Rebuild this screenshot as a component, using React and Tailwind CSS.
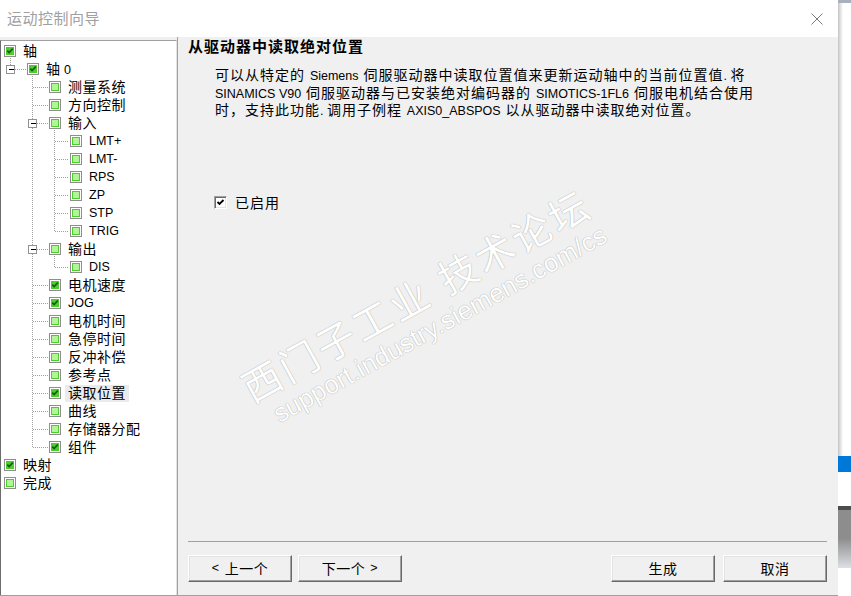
import React from "react";

const F = "font-['Liberation_Sans','Noto_Sans_CJK_SC',sans-serif]";

const rows = [
  { l: 0, t: "轴", c: true },
  { l: 1, t: "轴", n: " 0", c: true, exp: true },
  { l: 2, t: "测量系统" },
  { l: 2, t: "方向控制" },
  { l: 2, t: "输入", exp: true },
  { l: 3, t: "LMT+", lat: true },
  { l: 3, t: "LMT-", lat: true },
  { l: 3, t: "RPS", lat: true },
  { l: 3, t: "ZP", lat: true },
  { l: 3, t: "STP", lat: true },
  { l: 3, t: "TRIG", lat: true },
  { l: 2, t: "输出", exp: true },
  { l: 3, t: "DIS", lat: true },
  { l: 2, t: "电机速度", c: true },
  { l: 2, t: "JOG", c: true, lat: true },
  { l: 2, t: "电机时间" },
  { l: 2, t: "急停时间" },
  { l: 2, t: "反冲补偿" },
  { l: 2, t: "参考点" },
  { l: 2, t: "读取位置", c: true, sel: true },
  { l: 2, t: "曲线" },
  { l: 2, t: "存储器分配" },
  { l: 2, t: "组件", c: true },
  { l: 0, t: "映射", c: true },
  { l: 0, t: "完成" },
];

const spacer = ["w-[3px]", "w-[26px]", "w-[48px]", "w-[69px]"];
const IL = [3, 26, 48, 69];
const PX = [9.5, 31.5, 53.5];
const Y = (i) => 18 * i + 9.5;

function Icon({ checked }) {
  return (
    <svg width="12" height="12" viewBox="0 0 12 12" className="shrink-0 block">
      <rect x="0.5" y="0.5" width="11" height="11" fill="#ffffff" stroke="#8e8e8e" />
      <rect x="2" y="2" width="8" height="8" fill="#4ccd2c" />
      {checked ? (
        <path d="M3.3 5.6 L5.1 7.6 L8.8 3.6" stroke="#1a5a1a" strokeWidth="1.7" fill="none" />
      ) : (
        <rect x="3" y="3" width="6" height="6" fill="#b4f39c" />
      )}
    </svg>
  );
}

function TreeLines() {
  const lines = [];
  const boxes = [];
  rows.forEach((r, i) => {
    if (r.l === 0) return;
    const px = PX[r.l - 1];
    const y = Y(i);
    const x1 = r.exp ? px + 4.5 : px;
    lines.push(<line key={"h" + i} x1={x1} y1={y} x2={IL[r.l] - 1} y2={y} />);
    if (r.exp) boxes.push({ x: px, y, k: i });
  });
  rows.forEach((r, p) => {
    let last = -1;
    for (let j = p + 1; j < rows.length && rows[j].l > r.l; j++) {
      if (rows[j].l === r.l + 1) last = j;
    }
    if (last < 0) return;
    const px = PX[r.l];
    const endY = rows[last].exp ? Y(last) - 4.5 : Y(last);
    lines.push(<line key={"v" + p} x1={px} y1={Y(p) + 6} x2={px} y2={endY} />);
  });
  return (
    <svg
      width="176"
      height={rows.length * 18}
      className="absolute left-0 top-0 pointer-events-none"
      shapeRendering="crispEdges"
    >
      <g stroke="#a0a0a0" strokeWidth="1" strokeDasharray="1 1">
        {lines}
      </g>
      {boxes.map((b) => (
        <g key={b.k}>
          <rect x={b.x - 4} y={b.y - 4} width="8" height="8" fill="#ffffff" stroke="#919191" />
          <line x1={b.x - 2} y1={b.y} x2={b.x + 3} y2={b.y} stroke="#000000" />
        </g>
      ))}
    </svg>
  );
}

function L({ children }) {
  return <span className="text-[12.5px] tracking-normal">{children}</span>;
}

function Btn({ children }) {
  return (
    <button
      className={`${F} w-[104px] h-[27px] bg-[#f0f0f0] border border-t-white border-l-white border-r-[#696969] border-b-[#696969] shadow-[inset_-1px_-1px_0_#a0a0a0,inset_1px_1px_0_#e3e3e3] text-[14px] text-black tracking-[0.5px] flex items-center justify-center leading-none`}
    >
      {children}
    </button>
  );
}

export default function App() {
  return (
    <div className={`${F} relative w-[851px] h-[596px] overflow-hidden flex bg-white text-black`}>
      {/* dialog */}
      <div className="w-[838px] h-full flex flex-col bg-[#f0f0f0] border-b border-[#a0a0a0]">
        {/* title bar */}
        <div className="h-[37px] shrink-0 bg-white flex items-center justify-between pl-[7px] pr-[15px]">
          <span className="text-[15px] text-[#a0a0a0] tracking-[0.5px] leading-none">运动控制向导</span>
          <svg width="12" height="12" viewBox="0 0 12 12" className="block">
            <path d="M0.5 0.5 L11.5 11.5 M11.5 0.5 L0.5 11.5" stroke="#7a7a7a" strokeWidth="1" />
          </svg>
        </div>
        {/* body */}
        <div className="flex-1 flex min-h-0">
          {/* tree */}
          <div className="mt-[3px] w-[177px] shrink-0 bg-white border-l border-t border-r border-l-[#6d6d6d] border-t-[#a0a0a0] border-r-[#e3e3e3] pt-[1px]">
            <div className="relative">
              <TreeLines />
              {rows.map((r, i) => (
                <div key={i} className="relative flex h-[18px] items-center">
                  <div className={`${spacer[r.l]} shrink-0`} />
                  <Icon checked={r.c} />
                  {r.sel ? (
                    <span className="ml-[4px] px-[3px] bg-[#ebebeb] h-[17px] flex items-center text-[14px] tracking-[0.5px] leading-none">
                      {r.t}
                    </span>
                  ) : r.lat ? (
                    <span className="ml-[7px] text-[12.5px] leading-none">{r.t}</span>
                  ) : (
                    <span className="ml-[7px] text-[14px] tracking-[0.5px] leading-none whitespace-pre">
                      {r.t}
                      {r.n ? <span className="text-[12.5px] tracking-normal">{r.n}</span> : null}
                    </span>
                  )}
                </div>
              ))}
            </div>
          </div>
          {/* right panel */}
          <div className="flex-1 flex flex-col border-l border-[#a0a0a0] pl-[10px] pr-[11px]">
            <div className="pt-[1px] h-[19px] text-[15px] leading-[18px] font-bold tracking-[1px] whitespace-nowrap">
              从驱动器中读取绝对位置
            </div>
            <div className="ml-[27px] mt-[11px] text-[14px] leading-[16.5px] tracking-[1px] whitespace-nowrap">
              可以从特定的 <L>Siemens</L> 伺服驱动器中读取位置值来更新运动轴中的当前位置值<L>. </L>将
              <br />
              <L>SINAMICS V90</L> 伺服驱动器与已安装绝对编码器的 <L>SIMOTICS-1FL6</L> 伺服电机结合使用
              <br />
              时，支持此功能<L>. </L>调用子例程 <L>AXIS0_ABSPOS</L> 以从驱动器中读取绝对位置。
            </div>
            <div className="ml-[26px] mt-[75px] h-[16px] flex items-center">
              <div className="w-[13px] h-[13px] bg-white border border-t-[#a0a0a0] border-l-[#a0a0a0] border-r-white border-b-white shadow-[inset_1px_1px_0_#696969,inset_-1px_-1px_0_#e3e3e3] flex items-center justify-center">
                <svg width="9" height="9" viewBox="0 0 9 9" className="block">
                  <path d="M1.5 4 L3.5 6 L7.5 2" stroke="#000000" strokeWidth="1.8" fill="none" />
                </svg>
              </div>
              <span className="ml-[8px] text-[14px] tracking-[1px] leading-none">已启用</span>
            </div>
            <div className="flex-1" />
            <div className="h-px bg-[#a0a0a0]" />
            <div className="mt-[13px] mb-[13px] flex justify-between">
              <div className="flex gap-[6px]">
                <Btn>
                  <span className="text-[12.5px] mr-[5px]">&lt;</span>上一个
                </Btn>
                <Btn>
                  下一个<span className="text-[12.5px] ml-[5px]">&gt;</span>
                </Btn>
              </div>
              <div className="flex gap-[8px]">
                <Btn>生成</Btn>
                <Btn>取消</Btn>
              </div>
            </div>
          </div>
        </div>
      </div>
      {/* right background strip */}
      <div className="relative w-[13px] h-full flex flex-col bg-white">
        <div className="h-[3px] bg-[#a7b0bc]" />
        <div className="h-[453px] bg-white" />
        <div className="h-[16px] bg-[#0078d7]" />
        <div className="h-[34px] bg-white" />
        <div className="h-[4px] bg-[#4d4d4d]" />
        <div className="h-[28px] bg-[#8d8d8d]" />
        <div className="h-[30px] bg-gradient-to-b from-[#8d8d8d] to-[#dde0e5]" />
        <div className="flex-1 bg-white" />
        <div className="absolute left-0 top-[3px] w-[5px] h-[453px] bg-gradient-to-r from-[#c4c4c4] to-transparent" />
      </div>
      {/* watermark */}
      <div className="absolute left-[424px] top-[310px] -translate-x-1/2 -translate-y-1/2 -rotate-[29deg] pointer-events-none flex flex-col items-center text-white [text-shadow:0_0_1px_rgba(0,0,0,0.45)]">
        <div className="text-[39px] leading-[34px] tracking-[3px] whitespace-nowrap">西门子工业 技术论坛</div>
        <div className="ml-[14px] mt-[6px] text-[26px] leading-[22px] whitespace-nowrap">support.industry.siemens.com/cs</div>
      </div>
    </div>
  );
}
